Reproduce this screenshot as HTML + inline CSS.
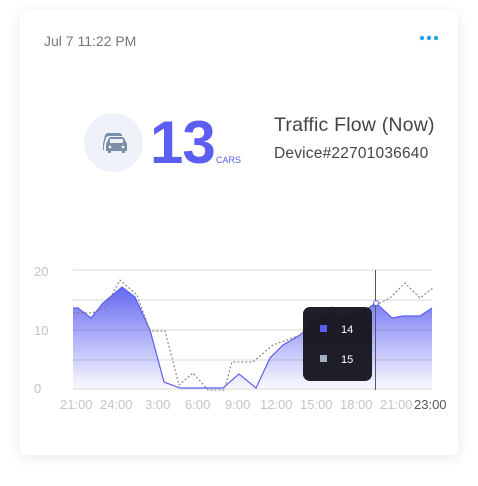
<!DOCTYPE html>
<html><head><style>
body{margin:0;width:478px;height:486px;background:#fff;font-family:"Liberation Sans",sans-serif;position:relative;overflow:hidden}
.card{position:absolute;left:20px;top:10px;width:438px;height:445px;background:#fff;border-radius:6px;box-shadow:0 3px 14px rgba(0,0,0,0.09)}
.t{position:absolute;white-space:nowrap}
</style></head><body>
<div class="card"></div>
<div class="t" style="left:44px;top:33px;font-size:14px;color:#777">Jul 7 11:22 PM</div>
<svg class="t" style="left:418px;top:33px" width="22" height="10"><circle cx="4" cy="5" r="2.2" fill="#29a3f0"/><circle cx="11" cy="5" r="2.2" fill="#29a3f0"/><circle cx="18" cy="5" r="2.2" fill="#29a3f0"/></svg>
<div class="t" style="left:84px;top:113px;width:59px;height:59px;border-radius:50%;background:#eef2f8"></div>
<svg class="t" style="left:99px;top:130px" width="30" height="26" viewBox="0 0 30 26">
<path d="M4 14 L6 5 Q7 3 9 3 L20 3 Q22 3 23 5 L23 6 L10 6 Q8 6 7 8 L5 15 L5 20 L4 20 Z" fill="#7a8ea8"/>
<path d="M8 12 L10 8 Q11 7 12 7 L23 7 Q24 7 25 8 L27 12 Q28 13 28 15 L28 21 L26 21 L26 23 L23 23 L23 21 L12 21 L12 23 L9 23 L9 21 L7 21 L7 15 Q7 13 8 12 Z" fill="#7a8ea8"/>
<rect x="11" y="9" width="13" height="4" fill="#eef2f8"/>
<circle cx="11" cy="17" r="1.4" fill="#eef2f8"/><circle cx="24" cy="17" r="1.4" fill="#eef2f8"/>
</svg>
<div class="t" style="left:150px;top:108px;font-size:60px;font-weight:bold;color:#5b5ef0;line-height:70px;letter-spacing:-1px">13</div>
<div class="t" style="left:216px;top:155px;font-size:9px;color:#5b5ef0">CARS</div>
<div class="t" style="left:274px;top:114px;font-size:19.5px;color:#444;letter-spacing:0.2px">Traffic Flow (Now)</div>
<div class="t" style="left:274px;top:145px;font-size:15.5px;color:#444;letter-spacing:0.2px">Device#22701036640</div>
<svg class="t" style="left:0;top:0" width="478" height="486">
<defs><linearGradient id="g" gradientUnits="userSpaceOnUse" x1="0" y1="285" x2="0" y2="389"><stop offset="0" stop-color="#5b5ef0" stop-opacity="0.95"/><stop offset="1" stop-color="#5b5ef0" stop-opacity="0.03"/></linearGradient></defs>
<g stroke="#ececec" stroke-width="2"><line x1="73" y1="270" x2="432" y2="270"/><line x1="73" y1="300" x2="432" y2="300"/><line x1="73" y1="330" x2="432" y2="330"/><line x1="73" y1="360" x2="432" y2="360"/><line x1="73" y1="389" x2="432" y2="389"/></g>
<path d="M73 308 L78 308 L91 318 L103 303 L122 287 L135 297 L150 330 L164 382 L180 388 L223 388 L239 374 L256 388 L270 358 L283 345 L300 335 L318 318 L330 313 L342 318 L358 315 L376 303 L392 318 L403 316 L420 316 L432 308 L432 389 L73 389 Z" fill="url(#g)"/>
<path d="M73 308 L78 308 L91 318 L103 303 L122 287 L135 297 L150 330 L164 382 L180 388 L223 388 L239 374 L256 388 L270 358 L283 345 L300 335 L318 318 L330 313 L342 318 L358 315 L376 303 L392 318 L403 316 L420 316 L432 308" fill="none" stroke="#5b5ef0" stroke-width="1.2"/>
<path d="M73 313 L92 313 L105 308 L120 280 L137 295 L150 331 L165 331 L179 385 L193 373 L208 390 L224 390 L232 362 L253 362 L273 345 L287 340 L300 335 L332 307 L343 318 L376 305 L390 298 L405 283 L420 298 L433 288" fill="none" stroke="#777" stroke-width="1" stroke-dasharray="2,2"/>
<line x1="375.5" y1="270" x2="375.5" y2="390" stroke="#556" stroke-width="1"/>
<circle cx="376" cy="303" r="2.5" fill="#fff" stroke="#5b5ef0"/>
<rect x="303" y="307" width="69" height="74" rx="7" fill="#16161e" opacity="0.96"/>
<rect x="320" y="325" width="7" height="7" fill="#5b5ef0"/>
<rect x="320" y="355" width="7" height="7" fill="#a0aec0"/>
<text x="341" y="333" font-size="11" fill="#fff" font-family="Liberation Sans">14</text>
<text x="341" y="363" font-size="11" fill="#fff" font-family="Liberation Sans">15</text>
<g font-size="13" fill="#c4c4c4" font-family="Liberation Sans"><text x="34" y="276">20</text><text x="34" y="335">10</text><text x="34" y="393">0</text>
<text x="60" y="409">21:00</text><text x="100" y="409">24:00</text><text x="145" y="409">3:00</text><text x="185" y="409">6:00</text><text x="225" y="409">9:00</text><text x="260" y="409">12:00</text><text x="300" y="409">15:00</text><text x="340" y="409">18:00</text><text x="380" y="409">21:00</text><text x="414" y="409" fill="#555">23:00</text></g>
</svg>
</body></html>
